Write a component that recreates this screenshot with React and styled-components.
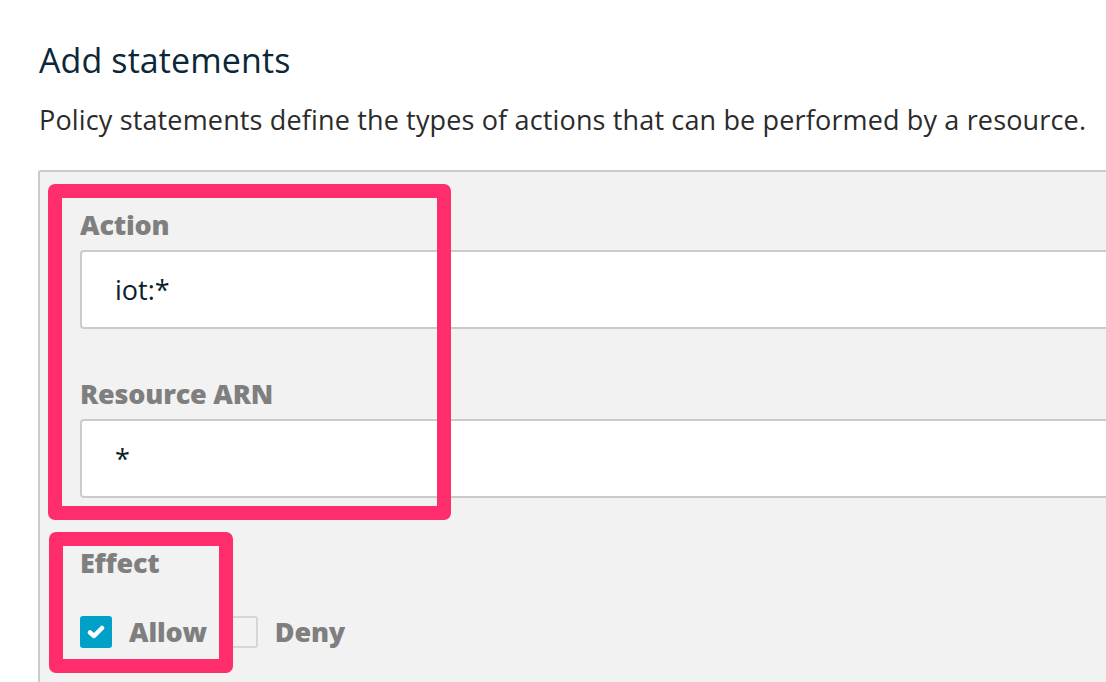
import React from 'react';
import styled, { createGlobalStyle } from 'styled-components';

const GlobalStyle = createGlobalStyle`
    html, body {
        margin: 0;
        padding: 0;
        background: #ffffff;
        overflow: hidden;
    }
    body {
        font-family: "Open Sans", "Noto Sans", Arial, sans-serif;
    }
`;

const Page = styled.div`
    position: relative;
    width: 1106px;
    height: 682px;
    overflow: hidden;
    padding: 40px 0 0 39px;
    box-sizing: border-box;
`;

const Title = styled.h2`
    margin: 0;
    font-size: 34px;
    line-height: 40px;
    font-weight: 400;
    letter-spacing: 0.1px;
    color: #0b2738;
`;

const Intro = styled.p`
    margin: 24px 0 0;
    font-size: 27px;
    line-height: 32px;
    color: #2b2b2b;
    letter-spacing: 0.15px;
    white-space: nowrap;
`;

const Panel = styled.div`
    margin: 34px 0 0 -1px;
    width: 1200px;
    height: 600px;
    box-sizing: border-box;
    padding: 37px 0 0 40px;
    background: #f2f2f2;
    border: 2px solid #cacaca;
    border-radius: 3px;
`;

const Field = styled.div`
    margin-bottom: 49px;
`;

const Label = styled.div`
    font-size: 27px;
    line-height: 32px;
    font-weight: 800;
    color: #7f7f7f;
    letter-spacing: -0.2px;
    margin-bottom: ${p => p.gap || 9}px;
`;

const Input = styled.div`
    height: 79px;
    box-sizing: border-box;
    border: 2px solid #cbcbcb;
    border-radius: 4px;
    background: #ffffff;
    display: flex;
    align-items: center;
    padding-left: 33px;
    font-size: 27px;
    color: #0b1e2b;
`;

const Options = styled.div`
    display: flex;
    align-items: center;
    gap: 19px;
`;

const Option = styled.label`
    display: flex;
    align-items: center;
    gap: 17px;
    font-size: 27px;
    font-weight: 800;
    color: #7f7f7f;
    letter-spacing: -0.2px;
`;

const Box = styled.span`
    width: 32px;
    height: 32px;
    box-sizing: border-box;
    border-radius: 3px;
    display: flex;
    align-items: center;
    justify-content: center;
    background: ${p => (p.checked ? '#00a1c9' : '#f2f2f2')};
    border: ${p => (p.checked ? 'none' : '2px solid #d6d6d6')};
`;

const Highlight = styled.div`
    position: absolute;
    left: ${p => p.x}px;
    top: ${p => p.y}px;
    width: ${p => p.w}px;
    height: ${p => p.h}px;
    box-sizing: border-box;
    border: 14px solid #ff2d6b;
    border-radius: 7px;
    pointer-events: none;
`;

const Check = () => (
    <svg width="18" height="14" viewBox="0 0 18 14">
        <path d="M3 7.5 L7 11 L15 3" fill="none" stroke="#fff" strokeWidth="4.5" strokeLinecap="round" strokeLinejoin="round" />
    </svg>
);

export default function App() {
    return (
        <>
            <GlobalStyle />
            <Page>
                <Title>Add statements</Title>
                <Intro>Policy statements define the types of actions that can be performed by a resource.</Intro>
                <Panel>
                    <Field>
                        <Label>Action</Label>
                        <Input>iot:*</Input>
                    </Field>
                    <Field>
                        <Label>Resource ARN</Label>
                        <Input>*</Input>
                    </Field>
                    <Label gap={34}>Effect</Label>
                    <Options>
                        <Option>
                            <Box checked>
                                <Check />
                            </Box>
                            Allow
                        </Option>
                        <Option>
                            <Box />
                            Deny
                        </Option>
                    </Options>
                </Panel>
                <Highlight x={48} y={184} w={403} h={336} />
                <Highlight x={49} y={532} w={184} h={141} />
            </Page>
        </>
    );
}
